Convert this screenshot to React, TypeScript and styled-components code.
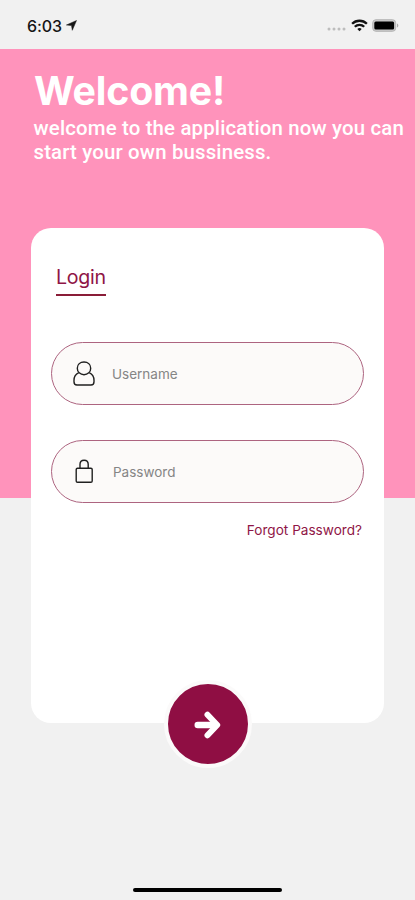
import React from 'react';
import styled, { createGlobalStyle } from 'styled-components';

const GlobalStyle = createGlobalStyle`
  *, *::before, *::after { box-sizing: border-box; }
  body { margin: 0; background: #f1f1f1; }
`;

const Screen = styled.main`
  display: flex;
  flex-direction: column;
  width: 415px;
  height: 900px;
  overflow: hidden;
  background: #f1f1f1;
  font-family: Inter, 'Liberation Sans', sans-serif;
`;

const StatusBar = styled.div`
  display: flex;
  align-items: center;
  justify-content: space-between;
  height: 49px;
  flex: none;
  padding: 2px 16px 0 27px;
`;

const StatusGroup = styled.div<{ $gap: number }>`
  display: flex;
  align-items: center;
  gap: ${({ $gap }) => $gap}px;
`;

const Clock = styled.span`
  font-size: 16px;
  font-weight: 500;
  line-height: 20px;
  letter-spacing: -0.1px;
  color: #161616;
`;

const Hero = styled.header`
  height: 449px;
  flex: none;
  padding: 18px 0 0 34px;
  background: #ff93bb;
  color: #fff;
`;

const Title = styled.h1`
  margin: 0;
  font-size: 39.3px;
  font-weight: 700;
  line-height: 48px;
  letter-spacing: -0.2px;
`;

const Subtitle = styled.p`
  margin: 1px 0 0 -0.5px;
  font-family: Roboto, sans-serif;
  font-size: 20.4px;
  font-weight: 500;
  line-height: 24px;
  letter-spacing: 0.16px;
  white-space: nowrap;
`;

const Card = styled.section`
  display: flex;
  flex-direction: column;
  align-items: flex-start;
  width: 353px;
  height: 495px;
  flex: none;
  margin: -270px 0 0 31px;
  padding: 35px 20px 0;
  border-radius: 20px;
  background: #fff;
`;

const Tab = styled.h2`
  margin: 0 0 46px 5px;
  height: 33px;
  border-bottom: 2px solid #8a1d38;
  font-size: 19.6px;
  font-weight: 400;
  line-height: 28px;
  letter-spacing: -0.3px;
  color: #8f1646;
`;

const Field = styled.label`
  display: flex;
  align-items: center;
  width: 313px;
  height: 63px;
  margin-bottom: 35px;
  padding-left: 21px;
  border: 1px solid #ad6480;
  border-radius: 32px;
  background: #fcfaf9;
`;

const Input = styled.input<{ $indent: number }>`
  width: 200px;
  margin-left: ${({ $indent }) => $indent}px;
  padding: 0;
  border: 0;
  outline: 0;
  background: transparent;
  font: 400 13.5px/20px Inter, sans-serif;
  color: #555;
  &::placeholder { color: #858585; opacity: 1; }
`;

const ForgotLink = styled.a`
  align-self: flex-end;
  margin: -18px 2px 0 0;
  font-size: 13.6px;
  line-height: 20px;
  color: #8f1646;
`;

const SubmitButton = styled.button`
  display: grid;
  place-items: center;
  align-self: center;
  width: 88px;
  height: 88px;
  margin: auto 0 -45px;
  padding: 1px 0 0 1px;
  border: 4px solid #fbfafa;
  border-radius: 50%;
  background: #8f0e43;
`;

const HomeIndicator = styled.div`
  width: 149px;
  height: 4px;
  margin: auto auto 8px;
  border-radius: 2px;
  background: #000;
`;

const LocationIcon = () => (
  <svg width="11" height="11" viewBox="0 0 11 11">
    <path d="M10.5.5 6.3 10.3 5.5 5.6.4 5Z" fill="#161616" stroke="#161616" strokeWidth=".5" strokeLinejoin="round" />
  </svg>
);

const SignalDots = () => (
  <svg width="20" height="12" viewBox="0 0 20 12">
    {[2, 7, 12, 17].map((x) => <circle key={x} cx={x} cy="9" r="1.5" fill="#bdbdbd" />)}
  </svg>
);

const WifiIcon = () => (
  <svg width="17" height="13" viewBox="0 0 17 13" fill="none" stroke="#111" strokeWidth="2.3">
    <path d="M1.1 4.8a10.5 10.5 0 0 1 14.8 0M3.8 7.8a6.7 6.7 0 0 1 9.4 0" />
    <path d="m8.5 12.3-2.2-2.2a3.1 3.1 0 0 1 4.4 0Z" fill="#111" stroke="none" />
  </svg>
);

const BatteryIcon = () => (
  <svg width="27" height="13" viewBox="0 0 27 13">
    <rect x=".7" y=".7" width="23" height="11.6" rx="3.2" fill="#c9c9c9" stroke="#b5b5b5" />
    <rect x="2.3" y="2.4" width="19.8" height="8.2" rx="1.5" fill="#000" />
    <path d="M25 4.5c1.8.8 1.8 3.2 0 4Z" fill="#aaa" />
  </svg>
);

const UserIcon = () => (
  <svg width="22" height="25" viewBox="0 0 22 25" fill="none" stroke="#202020" strokeWidth="1.4" strokeLinejoin="round">
    <path d="M5.8 11.6C2.9 12.9 1 15.8 1 19.3v1.5C1 22.9 2 24 4 24h14c2 0 3-1.1 3-3.2v-1.5c0-3.5-1.9-6.400-4.800-7.700" />
    <path d="M11 1c3.9 0 6.7 2.6 6.7 6.2 0 2-.7 3.6-1.9 4.6-1.3 1.2-2.9 1.9-4.8 1.9s-3.5-.7-4.8-1.9C5 10.8 4.3 9.2 4.3 7.2 4.3 3.6 7.1 1 11 1Z" />
  </svg>
);

const LockIcon = () => (
  <svg width="22" height="25" viewBox="0 0 22 25" fill="none" stroke="#202020" strokeWidth="1.4">
    <rect x="3.2" y="9.3" width="16" height="14" rx="1.3" />
    <path d="M7 9.3V5.3C7 2.9 8.800 1.2 11.1 1.2s4.1 1.7 4.1 4.1v4" />
  </svg>
);

const ArrowIcon = () => (
  <svg width="28" height="30" viewBox="0 0 28 30" fill="none" stroke="#fff" strokeLinecap="round">
    <path d="M3.7 15h17" strokeWidth="6.4" />
    <path d="m13.5 4.7 9.7 10.3-9.7 10.3" strokeWidth="6" strokeLinejoin="round" />
  </svg>
);

export default function App() {
  return (
    <>
      <GlobalStyle />
      <Screen>
        <StatusBar>
          <StatusGroup $gap={4}>
            <Clock>6:03</Clock>
            <LocationIcon />
          </StatusGroup>
          <StatusGroup $gap={4}>
            <SignalDots />
            <WifiIcon />
            <BatteryIcon />
          </StatusGroup>
        </StatusBar>
        <Hero>
          <Title>Welcome!</Title>
          <Subtitle>
            welcome to the application now you can
            <br />
            start your own bussiness.
          </Subtitle>
        </Hero>
        <Card>
          <Tab>Login</Tab>
          <Field>
            <UserIcon />
            <Input $indent={17} placeholder="Username" aria-label="Username" />
          </Field>
          <Field>
            <LockIcon />
            <Input $indent={18} type="password" placeholder="Password" aria-label="Password" />
          </Field>
          <ForgotLink>Forgot Password?</ForgotLink>
          <SubmitButton aria-label="Log in">
            <ArrowIcon />
          </SubmitButton>
        </Card>
        <HomeIndicator />
      </Screen>
    </>
  );
}
